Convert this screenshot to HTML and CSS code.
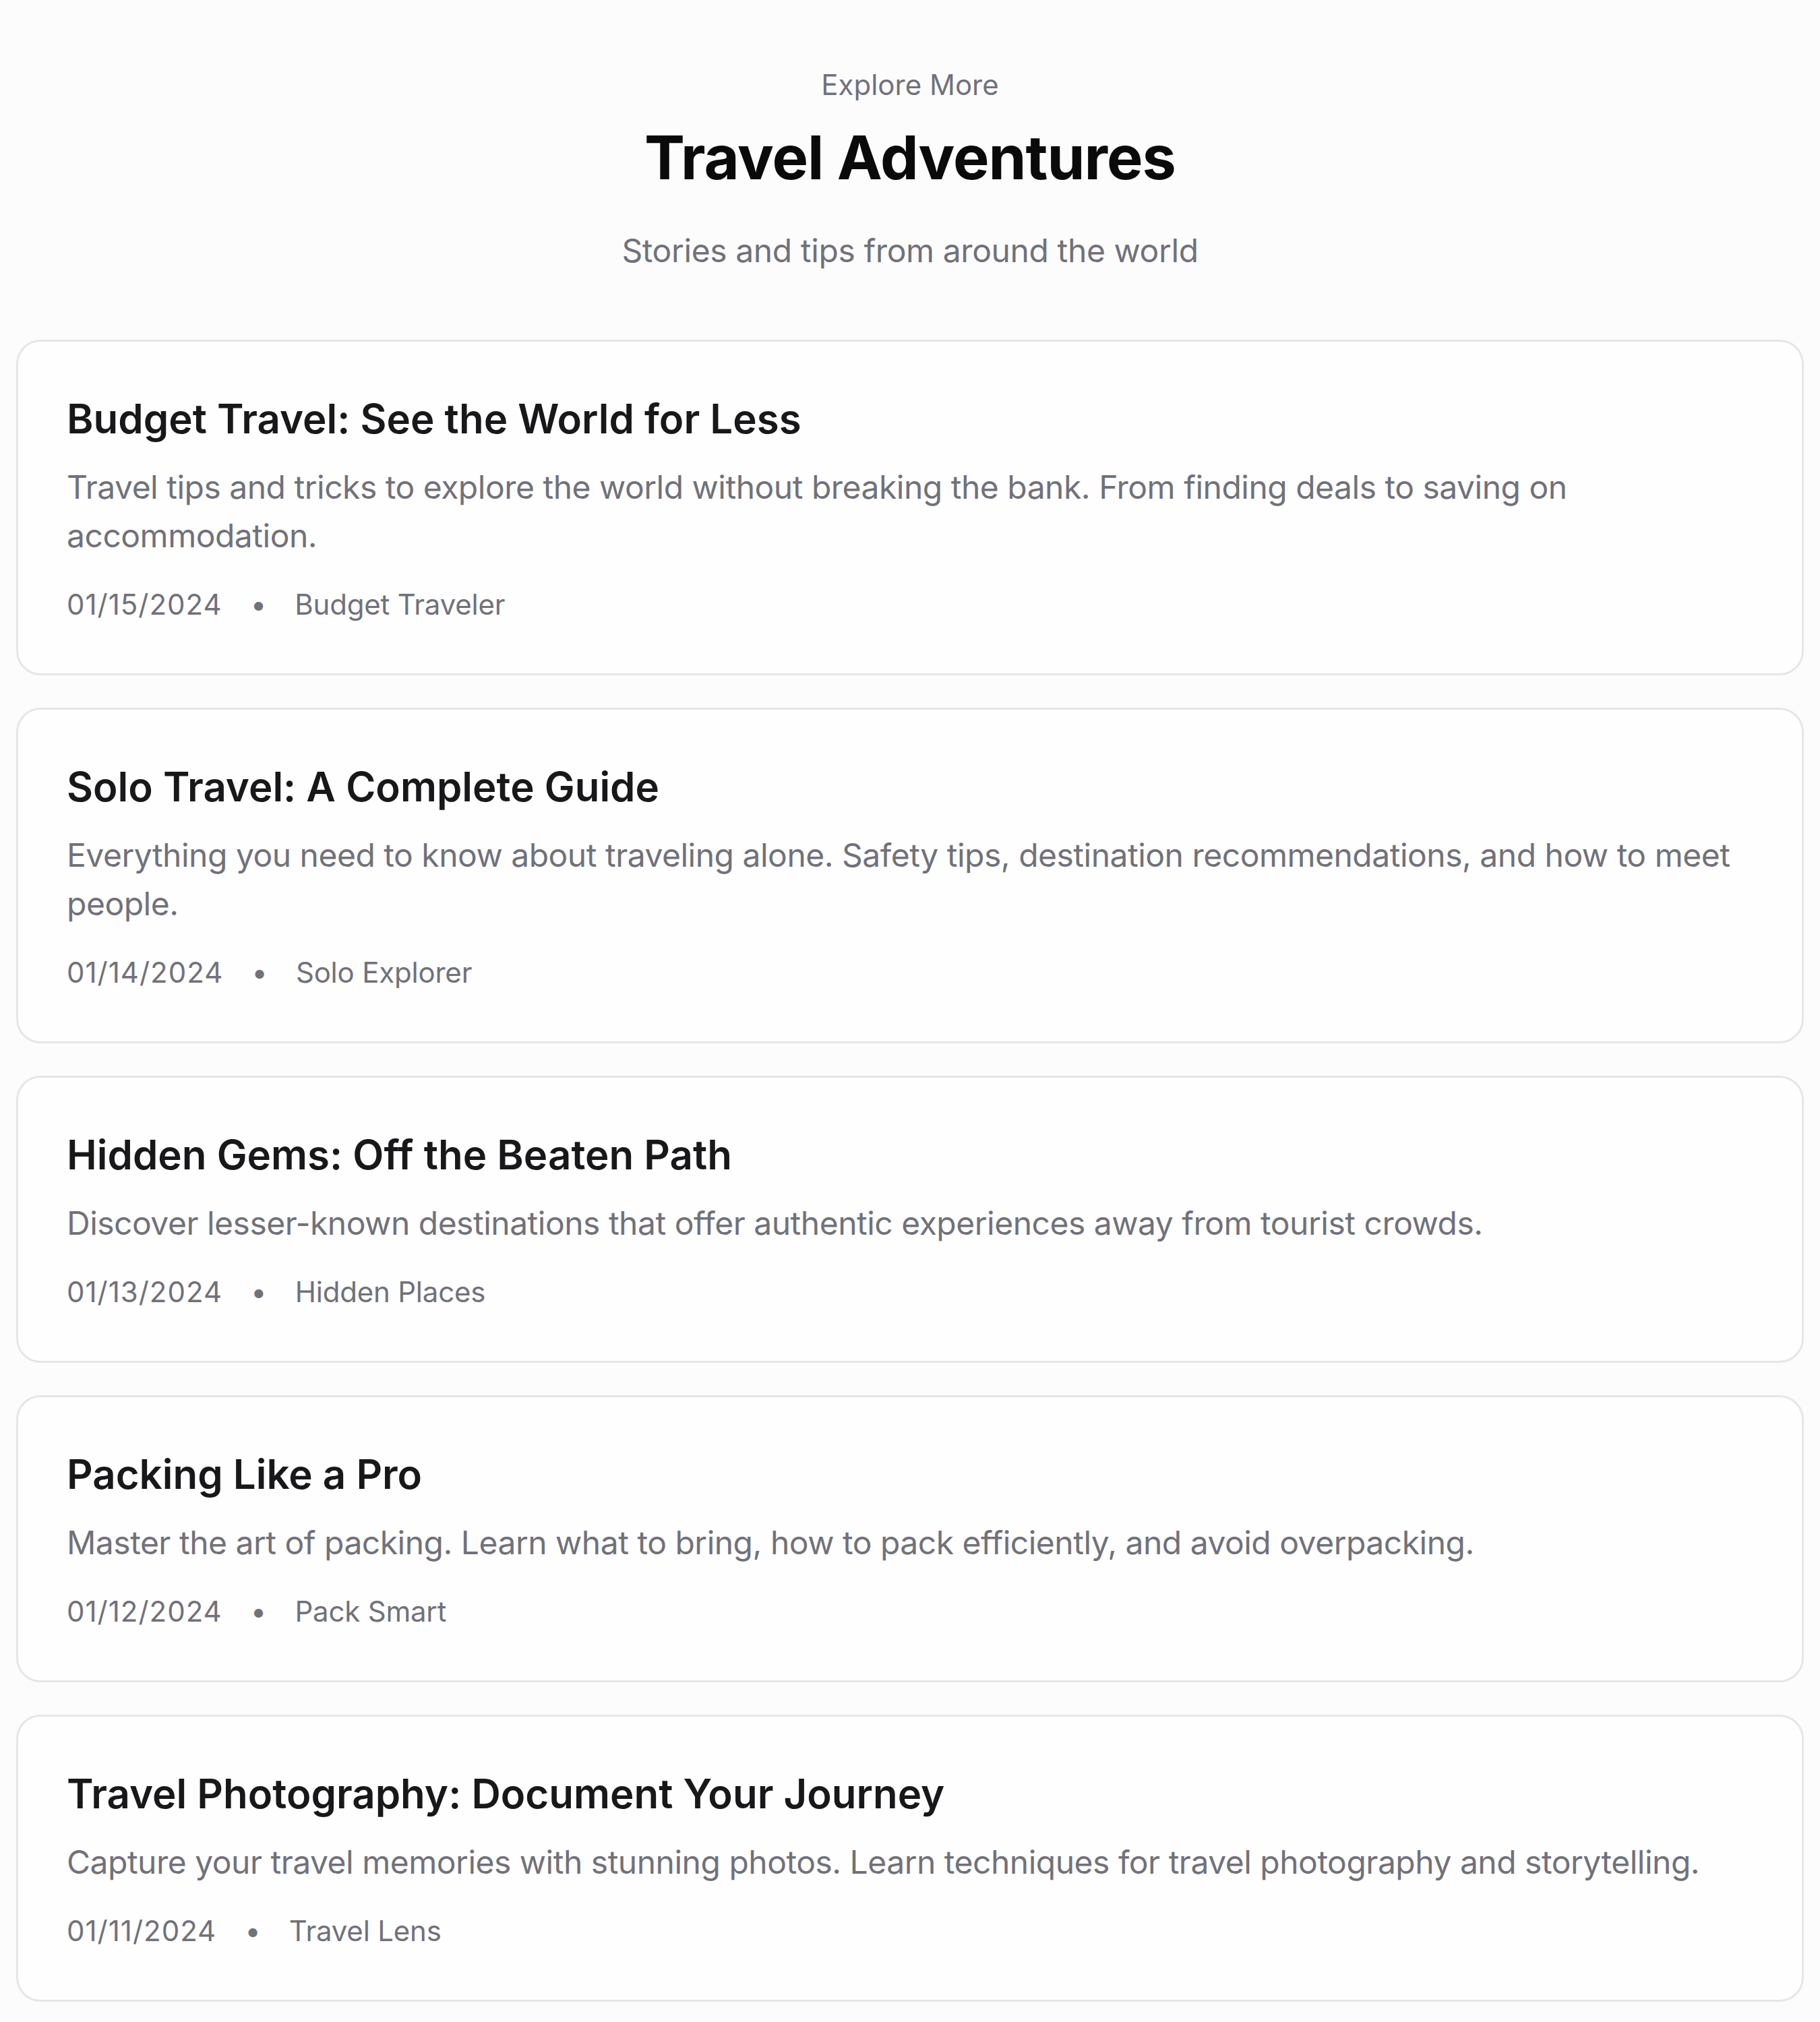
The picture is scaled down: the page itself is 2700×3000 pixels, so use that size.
FILE: index.html
```html
<!DOCTYPE html>
<html lang="en">
<head>
<meta charset="utf-8">
<title>Travel Adventures</title>
<link rel="stylesheet" href="styles.css">
</head>
<body>
  <main class="page">
    <header class="intro">
      <p class="eyebrow">Explore More</p>
      <h1 class="headline">Travel Adventures</h1>
      <p class="lede">Stories and tips from around the world</p>
    </header>

    <section class="posts">
      <article class="post">
        <h2 class="post-title">Budget Travel: See the World for Less</h2>
        <p class="post-text">Travel tips and tricks to explore the world without breaking the bank. From finding deals to saving on accommodation.</p>
        <div class="post-meta"><span class="date">01/15/2024</span><span class="dot">•</span><span class="author">Budget Traveler</span></div>
      </article>

      <article class="post">
        <h2 class="post-title">Solo Travel: A Complete Guide</h2>
        <p class="post-text">Everything you need to know about traveling alone. Safety tips, destination recommendations, and how to meet people.</p>
        <div class="post-meta"><span class="date">01/14/2024</span><span class="dot">•</span><span class="author">Solo Explorer</span></div>
      </article>

      <article class="post">
        <h2 class="post-title">Hidden Gems: Off the Beaten Path</h2>
        <p class="post-text">Discover lesser-known destinations that offer authentic experiences away from tourist crowds.</p>
        <div class="post-meta"><span class="date">01/13/2024</span><span class="dot">•</span><span class="author">Hidden Places</span></div>
      </article>

      <article class="post">
        <h2 class="post-title">Packing Like a Pro</h2>
        <p class="post-text">Master the art of packing. Learn what to bring, how to pack efficiently, and avoid overpacking.</p>
        <div class="post-meta"><span class="date">01/12/2024</span><span class="dot">•</span><span class="author">Pack Smart</span></div>
      </article>

      <article class="post">
        <h2 class="post-title">Travel Photography: Document Your Journey</h2>
        <p class="post-text">Capture your travel memories with stunning photos. Learn techniques for travel photography and storytelling.</p>
        <div class="post-meta"><span class="date">01/11/2024</span><span class="dot">•</span><span class="author">Travel Lens</span></div>
      </article>
    </section>
  </main>
</body>
</html>
```

FILE: styles.css
```css
* { box-sizing: border-box; }

html, body {
  background: #fdfcfd;
}

body {
  margin: 24px;
  font-family: Inter, "Noto Sans", "Liberation Sans", sans-serif;
  color: #18181b;
}

.page {
  display: flex;
  flex-direction: column;
}

.intro {
  display: flex;
  flex-direction: column;
  align-items: center;
  text-align: center;
  padding-top: 72px;
  margin-bottom: 96px;
}

.eyebrow {
  margin: 0 0 24px;
  font-size: 42px;
  line-height: 60px;
  color: #71717a;
}

.headline {
  margin: 0;
  font-size: 90px;
  line-height: 108px;
  font-weight: 700;
  color: #0a0a0a;
  letter-spacing: -1px;
}

.lede {
  margin: 48px 0 0;
  font-size: 48px;
  line-height: 72px;
  color: #71717a;
  letter-spacing: -0.4px;
}

.posts {
  display: flex;
  flex-direction: column;
  gap: 48px;
}

.post {
  border: 3px solid #e6e5e8;
  border-radius: 36px;
  background: #fefefe;
  padding: 72px;
}

.post-title {
  margin: 0 0 24px;
  font-size: 60px;
  line-height: 84px;
  font-weight: 600;
  color: #18181b;
}

.post-text {
  margin: 0;
  font-size: 48px;
  line-height: 72px;
  color: #71717a;
  letter-spacing: -0.5px;
}

.post-meta {
  margin-top: 36px;
  display: flex;
  align-items: center;
  gap: 42px;
  font-size: 42px;
  line-height: 60px;
  color: #71717a;
}

.date {
  letter-spacing: 1px;
}

.author {
  letter-spacing: -0.2px;
}

.dot {
  font-size: 42px;
}
```
